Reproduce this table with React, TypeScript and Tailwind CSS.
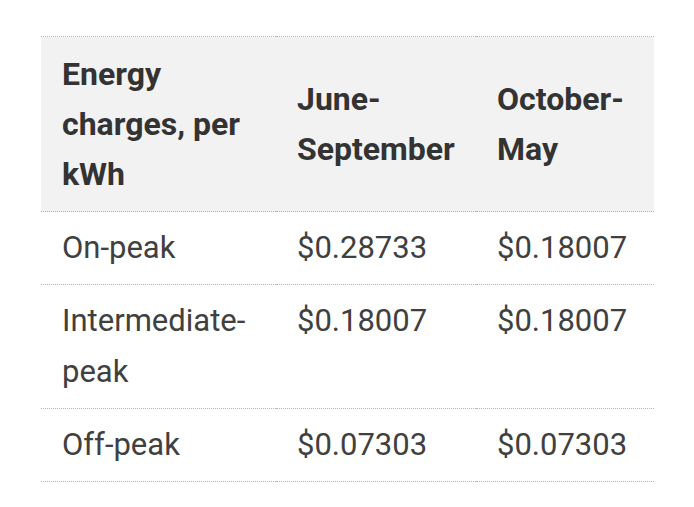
import React from "react";

const rows = [
  { label: "On-peak", summer: "$0.28733", winter: "$0.18007" },
  { label: "Intermediate-peak", summer: "$0.18007", winter: "$0.18007" },
  { label: "Off-peak", summer: "$0.07303", winter: "$0.07303" },
];

export default function App() {
  return (
    <div className="min-h-screen bg-white pt-[36px] pl-[41px] font-['Roboto',sans-serif]">
      <table className="w-[613px] table-fixed border-collapse">
        <colgroup>
          <col className="w-[235px]" />
          <col className="w-[200px]" />
          <col className="w-[178px]" />
        </colgroup>
        <thead>
          <tr className="bg-[#f2f2f2] border-y border-dotted border-[#b5b5b5] text-[#333] text-[32px] leading-[50px]">
            <th className="pt-[12px] pb-[12px] pl-[21px] pr-2 text-left align-middle font-bold">
              Energy charges, per kWh
            </th>
            <th className="pt-[12px] pb-[12px] pl-[21px] pr-2 text-left align-middle font-bold">
              June-September
            </th>
            <th className="pt-[12px] pb-[12px] pl-[21px] pr-2 text-left align-middle font-bold">
              October-May
            </th>
          </tr>
        </thead>
        <tbody className="text-[#404040] text-[31px] leading-[51px]">
          {rows.map((r) => (
            <tr key={r.label} className="border-b border-dotted border-[#b5b5b5]">
              <td className="pt-[10px] pb-[11px] pl-[21px] pr-2 align-top">{r.label}</td>
              <td className="pt-[10px] pb-[11px] pl-[21px] pr-2 align-top">{r.summer}</td>
              <td className="pt-[10px] pb-[11px] pl-[21px] pr-2 align-top">{r.winter}</td>
            </tr>
          ))}
        </tbody>
      </table>
    </div>
  );
}
